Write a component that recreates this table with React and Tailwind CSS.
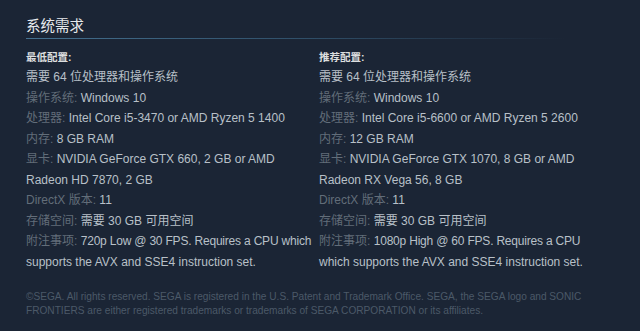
import React from 'react'

const minimum = [
    { value: '需要 64 位处理器和操作系统' },
    { label: '操作系统:', value: 'Windows 10' },
    { label: '处理器:', value: 'Intel Core i5-3470 or AMD Ryzen 5 1400' },
    { label: '内存:', value: '8 GB RAM' },
    { label: '显卡:', value: 'NVIDIA GeForce GTX 660, 2 GB or AMD', more: 'Radeon HD 7870, 2 GB' },
    { label: 'DirectX 版本:', value: '11' },
    { label: '存储空间:', value: '需要 30 GB 可用空间' },
    { label: '附注事项:', value: '720p Low @ 30 FPS. Requires a CPU which', more: 'supports the AVX and SSE4 instruction set.', tight: true },
]

const recommended = [
    { value: '需要 64 位处理器和操作系统' },
    { label: '操作系统:', value: 'Windows 10' },
    { label: '处理器:', value: 'Intel Core i5-6600 or AMD Ryzen 5 2600' },
    { label: '内存:', value: '12 GB RAM' },
    { label: '显卡:', value: 'NVIDIA GeForce GTX 1070, 8 GB or AMD', more: 'Radeon RX Vega 56, 8 GB' },
    { label: 'DirectX 版本:', value: '11' },
    { label: '存储空间:', value: '需要 30 GB 可用空间' },
    { label: '附注事项:', value: '1080p High @ 60 FPS. Requires a CPU', more: 'which supports the AVX and SSE4 instruction set.', tight: true },
]

function ReqColumn({ title, rows }) {
    return (
        <div>
            <div className="text-[10.5px] font-bold leading-[20px] text-[#dcdedf]">{title}</div>
            <ul className="text-[12px] leading-[20.5px] text-[#b8c0c8]">
                {rows.map((row, i) => (
                    <li key={i} className={row.more ? 'whitespace-nowrap' : ''}>
                        {row.label && <span className="text-[#626d79]">{row.label}&nbsp;</span>}
                        {row.more ? (
                            <>
                                <span className={row.tight ? 'tracking-[-0.2px]' : ''}>{row.value}</span>
                                <br />
                                <span>{row.more}</span>
                            </>
                        ) : (
                            row.value
                        )}
                    </li>
                ))}
            </ul>
        </div>
    )
}

export default function App() {
    return (
        <div
            className="min-h-screen bg-[#1b2535] pl-[26px] pt-[16px]"
            style={{ fontFamily: '"Liberation Sans", Arial, "Noto Sans CJK SC", sans-serif' }}
        >
            <h2 className="text-[14.5px] leading-[20px] text-[#e6e9ec] mb-[2px]">系统需求</h2>
            <div className="h-px w-[540px] bg-gradient-to-r from-[#44708f] via-[#30506a] to-transparent" />
            <div className="grid grid-cols-[283px_283px] gap-x-[10px] mt-[8px]">
                <ReqColumn title="最低配置:" rows={minimum} />
                <ReqColumn title="推荐配置:" rows={recommended} />
            </div>
            <p className="mt-[18px] w-[570px] text-[10.15px] leading-[14px] text-[#4b5968]">
                ©SEGA. All rights reserved. SEGA is registered in the U.S. Patent and Trademark Office. SEGA, the SEGA logo and SONIC FRONTIERS are either registered trademarks or trademarks of SEGA CORPORATION or its affiliates.
            </p>
        </div>
    )
}
